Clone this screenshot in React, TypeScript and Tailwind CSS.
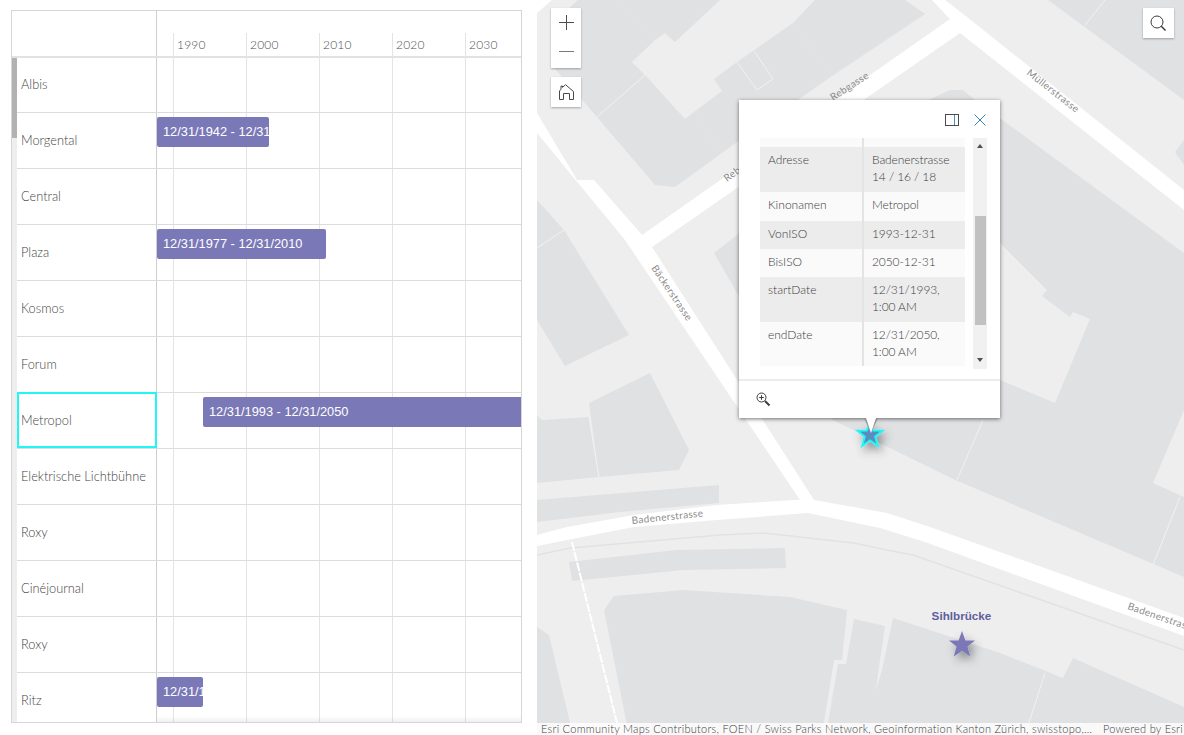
const cinemas: { name: string; bar?: { ml: string; w: string; text: string } }[] = [
  { name: "Albis" },
  { name: "Morgental", bar: { ml: "ml-0", w: "w-[112px]", text: "12/31/1942 - 12/31/1977" } },
  { name: "Central" },
  { name: "Plaza", bar: { ml: "ml-0", w: "w-[169px]", text: "12/31/1977 - 12/31/2010" } },
  { name: "Kosmos" },
  { name: "Forum" },
  { name: "Metropol", bar: { ml: "ml-[46px]", w: "w-[320px]", text: "12/31/1993 - 12/31/2050" } },
  { name: "Elektrische Lichtbühne" },
  { name: "Roxy" },
  { name: "Cinéjournal" },
  { name: "Roxy" },
  { name: "Ritz", bar: { ml: "ml-0", w: "w-[46px]", text: "12/31/1930 - 12/31/1990" } },
];

const years = ["1990", "2000", "2010", "2020", "2030"];
const gridX = ["left-[161px]", "left-[234px]", "left-[307px]", "left-[380px]", "left-[453px]"];

const fields: { k: string; v: string[]; h: string; bg: string }[] = [
  { k: "", v: [], h: "h-[9px]", bg: "bg-[#fafafa]" },
  { k: "Adresse", v: ["Badenerstrasse", "14 / 16 / 18"], h: "h-[45px]", bg: "bg-[#ececec]" },
  { k: "Kinonamen", v: ["Metropol"], h: "h-[29px]", bg: "bg-[#fafafa]" },
  { k: "VonISO", v: ["1993-12-31"], h: "h-[28px]", bg: "bg-[#ececec]" },
  { k: "BisISO", v: ["2050-12-31"], h: "h-[28px]", bg: "bg-[#fafafa]" },
  { k: "startDate", v: ["12/31/1993,", "1:00 AM"], h: "h-[45px]", bg: "bg-[#ececec]" },
  { k: "endDate", v: ["12/31/2050,", "1:00 AM"], h: "h-[44px]", bg: "bg-[#fafafa]" },
];

function Timeline() {
  return (
    <div className="relative h-[713px] w-[511px] overflow-hidden border border-[#d6d6d6] bg-white font-['Lato',sans-serif]">
      {gridX.map((x) => (
        <div key={x} className={`absolute ${x} bottom-0 top-[22px] w-px bg-[#e4e4e4]`} />
      ))}
      <div className="flex h-[47px] overflow-hidden border-b-2 border-[#e2e2e2]">
        <div className="w-[145px] shrink-0 border-r border-[#cfcfcf]" />
        <div className="flex items-end pb-[2px] pl-[20px] text-[12px] font-light leading-[18px] tracking-[0.2px] text-[#505050]">
          {years.map((y) => (
            <span key={y} className="w-[73px] shrink-0">{y}</span>
          ))}
        </div>
      </div>
      {cinemas.map((c, i) => (
        <div
          key={i}
          className={`relative flex border-b border-[#dcdcdc] ${i === 0 ? "h-[55px]" : "h-[56px]"}`}
        >
          <div className="flex w-[145px] shrink-0 items-center border-r border-[#cfcfcf] pl-[9px] text-[12.8px] font-light text-[#444444]">
            {c.name}
          </div>
          {c.name === "Metropol" && (
            <div className="absolute -top-px left-[5px] h-[56px] w-[140px] border-2 border-[#22f5f5]" />
          )}
          <div className="flex-1 overflow-hidden">
            {c.bar && (
              <div
                className={`mt-[4px] h-[30px] ${c.bar.ml} ${c.bar.w} overflow-hidden whitespace-nowrap rounded-[2px] bg-[#7b78b8] pl-[6px] font-['Liberation_Sans',sans-serif] text-[12.8px] leading-[29px] text-white`}
              >
                {c.bar.text}
              </div>
            )}
          </div>
        </div>
      ))}
      <div className="absolute bottom-0 left-[145px] right-0 h-[6px] bg-gradient-to-b from-transparent to-[rgba(0,0,0,0.06)]" />
      <div className="absolute bottom-0 left-0 top-[47px] w-[5px] bg-[#eeeeee]">
        <div className="h-[80px] w-[5px] bg-[#b2b2b2]" />
      </div>
    </div>
  );
}

function MapDrawing() {
  const bld = "#e0e1e3";
  const lbl = "font-['Lato',sans-serif] text-[10px] tracking-[0.35px]";
  return (
    <svg viewBox="537 0 647 735" className="absolute inset-0 h-full w-full">
      <rect x="537" y="0" width="647" height="735" fill="#eeeeee" />
      <polygon points="537,0 552,0 537,13" fill="#ffffff" />
      <g fill={bld}>
        <polygon points="617,0 654,41 632,62 645,75 597,117 556,70 551,60 551,25 578,0" />
        <polygon points="645,75 597,117 655,185 675,187 740,140 721,153 694,112 685,119" />
        <polygon points="617,0 654,41 665,33 675,42 720,0" />
        <polygon points="694,112 722,91 714,79 737,62 793,23 832,76 740,140 721,153" />
        <polygon points="815,0 793,23 832,76 925,14 905,0" />
        <polygon points="1048,0 1184,100 1184,0" />
        <polygon points="950,90 963,90 975,100 1184,253 1184,577 953,479 833,420 737,293 714,253 737,235 800,160" />
        <polygon points="1175,152 1184,140 1184,165" />
        <polygon points="537,200 564,230 629,335 565,366 537,320" />
        <polygon points="650,373 589,403 599,477 679,470 689,450" />
        <polygon points="589,417 542,420 537,415 537,483 599,477" />
        <polygon points="537,500 719,485 719,503 620,512 537,522" />
        <polygon points="569,562 677,550 785,548 786,568 684,570 572,581" />
        <polygon points="614,596 684,590 790,597 847,610 842,660 834,660 822,735 629,735 604,610" />
        <polygon points="854,619 885,626 879,667 874,705 868,735 826,735 838,664 846,664" />
        <polygon points="893,618 1000,653 1063,678 1073,658 1184,707 1184,735 860,735 870,710 882,670" />
        <polygon points="537,627 549,635 573,735 537,735" />
      </g>
      <g fill="#eeeeee">
        <polygon points="1000,243 1047,290 1042,296 1070,317 1073,312 1090,319 1055,403 1000,380" />
        <polygon points="1184,410 1153,483 1184,497" />
      </g>
      <g stroke="#f1f1f2" strokeWidth="1" fill="none">
        <line x1="537" y1="248" x2="564" y2="230" />
        <line x1="1105" y1="0" x2="1085" y2="25" />
        <line x1="1045" y1="673" x2="1025" y2="735" />
        <line x1="597" y1="117" x2="645" y2="75" />
        <line x1="754" y1="51" x2="773" y2="79" />
        <line x1="737" y1="62" x2="757" y2="90" />
        <line x1="773" y1="79" x2="757" y2="90" />
        <line x1="1180" y1="497" x2="1153" y2="565" />
        <line x1="983" y1="420" x2="957" y2="480" />
        <line x1="589" y1="417" x2="599" y2="477" />
      </g>
      <g fill="#ffffff">
        <polygon points="537,113 537,133 625,240 800,500 814,500 652,247 960,33 1184,210 1184,190 967,17 945,0 932,0 950,19 642,235 594,180 577,180" />
        <polygon points="537,535 567,527 634,515 717,505 795,500 814,500 887,513 930,527 1184,618 1184,636 925,542 880,528 808,513 717,520 634,527 567,540 537,546" />
      </g>
      <polyline
        points="537,555 570,548 720,535 764,533 854,543 887,550 913,555 1184,650"
        fill="none"
        stroke="#e2e2e2"
        strokeWidth="1.5"
      />
      <line x1="572" y1="542" x2="617" y2="723" stroke="#ffffff" strokeWidth="2" strokeDasharray="9 1.5" />
      <g fill="#8c8c8c" className={lbl}>
        <text transform="translate(833,101) rotate(-33)">Rebgasse</text>
        <text transform="translate(727,182) rotate(-36)">Rebgasse</text>
        <text transform="translate(1026,74) rotate(38)">Müllerstrasse</text>
        <text transform="translate(651,268) rotate(56)">Bäckerstrasse</text>
        <text transform="translate(632,524) rotate(-6)">Badenerstrasse</text>
        <text transform="translate(1127,609) rotate(19)">Badenerstrasse</text>
      </g>
      <defs>
        <filter id="starShadow" x="-100%" y="-100%" width="300%" height="300%">
          <feDropShadow dx="3" dy="5" stdDeviation="5" floodColor="#000000" floodOpacity="0.4" />
        </filter>
      </defs>
      <polygon
        points="962,631 965.4,640.4 975,640.6 967.4,646.6 970.2,656.4 962,650.8 953.8,656.4 956.6,646.6 949,640.6 958.6,640.4"
        fill="#7b78b8"
        filter="url(#starShadow)"
      />
      <polygon
        points="870,422 873.2,430.6 882.5,430.7 875.2,436.7 877.8,445.8 870,440.5 862.2,445.8 864.8,436.7 857.5,430.7 866.8,430.6"
        fill="#5a8cbf"
        stroke="#22f5f5"
        strokeWidth="2"
        filter="url(#starShadow)"
      />
      <text
        x="961.5"
        y="620"
        textAnchor="middle"
        fill="#615e9c"
        className="font-['Liberation_Sans',sans-serif] text-[11.7px] font-bold"
      >
        Sihlbrücke
      </text>
    </svg>
  );
}

function Popup() {
  return (
    <div className="absolute left-[202px] top-[100px] h-[318px] w-[261px] bg-white shadow-[0_1px_4px_rgba(0,0,0,0.55)] font-['Lato',sans-serif]">
      <div className="flex h-[38px] items-start justify-end gap-[15px] pr-[14px] pt-[14px]">
        <svg width="14" height="12" viewBox="0 0 14 12" fill="none">
          <rect x="0.5" y="0.5" width="13" height="11" stroke="#4a4a4a" />
          <line x1="9.5" y1="1" x2="9.5" y2="11" stroke="#4a90c0" />
        </svg>
        <svg width="12" height="12" viewBox="0 0 12 12" fill="none" stroke="#3f7fae" strokeWidth="1">
          <line x1="0.5" y1="0.5" x2="11.5" y2="11.5" />
          <line x1="11.5" y1="0.5" x2="0.5" y2="11.5" />
        </svg>
      </div>
      <div className="flex h-[231px] gap-[8px] pl-[21px]">
        <div className="h-[228px] w-[205px] text-[12px] font-light leading-[17px] text-[#3c3c3c]">
          {fields.map((f, i) => (
            <div key={i} className={`flex ${f.h} ${f.bg}`}>
              <div className="h-full w-[104px] border-r-2 border-[#e4e4e4] pl-[8px] pt-[4px]">{f.k}</div>
              <div className="pl-[8px] pt-[4px] tracking-[-0.1px]">
                {f.v.map((l) => (
                  <div key={l}>{l}</div>
                ))}
              </div>
            </div>
          ))}
        </div>
        <div className="flex h-[231px] w-[14px] flex-col items-center bg-[#f1f1f1]">
          <div className="mt-[6px] h-0 w-0 border-x-[3.5px] border-b-[4px] border-x-transparent border-b-[#505050]" />
          <div className="mt-[68px] h-[109px] w-[11px] bg-[#c1c1c1]" />
          <div className="mt-[33px] h-0 w-0 border-x-[3.5px] border-t-[4px] border-x-transparent border-t-[#505050]" />
        </div>
      </div>
      <div className="mt-[10px] flex h-[39px] items-center border-t-2 border-[#ececec] pl-[17px]">
        <svg width="15" height="15" viewBox="0 0 15 15" fill="none" stroke="#3c3c3c">
          <circle cx="5.5" cy="5.5" r="4.5" />
          <path d="M3.2 5.5h4.6M5.5 3.2v4.6" />
          <path d="M9 9l4.5 4.5" strokeWidth="2" />
        </svg>
      </div>
      <div className="absolute left-[125px] top-[318px] h-0 w-0 border-x-[7px] border-t-[15px] border-x-transparent border-t-[#8f8f8f]" />
      <div className="absolute left-[127px] top-[318px] h-0 w-0 border-x-[5px] border-t-[15px] border-x-transparent border-t-white" />
    </div>
  );
}

export default function App() {
  return (
    <div className="flex h-[735px] w-[1184px] overflow-hidden bg-white">
      <div className="w-[537px] pl-[11px] pt-[10px]">
        <Timeline />
      </div>
      <div className="relative flex-1 overflow-hidden">
        <MapDrawing />
        <div className="absolute left-[14px] top-[8px] flex h-[60px] w-[30px] flex-col bg-white shadow-[0_1px_2px_rgba(0,0,0,0.3)]">
          <div className="flex h-[30px] items-center justify-center pb-[2px]">
            <svg width="15" height="15" viewBox="0 0 15 15" stroke="#4d4d4d" fill="none">
              <path d="M0 7.5h15M7.5 0v15" />
            </svg>
          </div>
          <div className="flex h-[30px] items-center justify-center pb-[4px]">
            <svg width="15" height="15" viewBox="0 0 15 15" stroke="#7a7a7a" fill="none">
              <path d="M0 7.5h15" />
            </svg>
          </div>
        </div>
        <div className="absolute left-[14px] top-[77px] flex h-[30px] w-[30px] items-center justify-center bg-white shadow-[0_1px_2px_rgba(0,0,0,0.3)]">
          <svg width="15" height="16" viewBox="0 0 15 16" fill="none" stroke="#4a4a4a">
            <path d="M0.5 15.5V7L2 5.2V2H3.5V3.4L6.5 0.7L14.5 7.5V15.5H10.5V9.5H4.5V15.5Z" />
          </svg>
        </div>
        <div className="absolute left-[606px] top-[8px] flex h-[30px] w-[31px] items-center justify-center bg-white pr-[2px] shadow-[0_1px_2px_rgba(0,0,0,0.3)]">
          <svg width="16" height="16" viewBox="0 0 16 16" fill="none" stroke="#3c3c3c">
            <circle cx="7" cy="7" r="6" />
            <path d="M11.3 11.3L15.5 15.5" strokeWidth="1.5" />
          </svg>
        </div>
        <Popup />
        <div className="absolute bottom-0 left-0 right-0 flex h-[12px] items-center justify-between bg-[rgba(255,255,255,0.8)] pl-[4px] pr-[1px] font-['Lato',sans-serif] text-[11px] font-light leading-[12px] tracking-[0.27px] text-[#404040]">
          <span>Esri Community Maps Contributors, FOEN / Swiss Parks Network, Geoinformation Kanton Zürich, swisstopo,…</span>
          <span>Powered by Esri</span>
        </div>
      </div>
    </div>
  );
}
